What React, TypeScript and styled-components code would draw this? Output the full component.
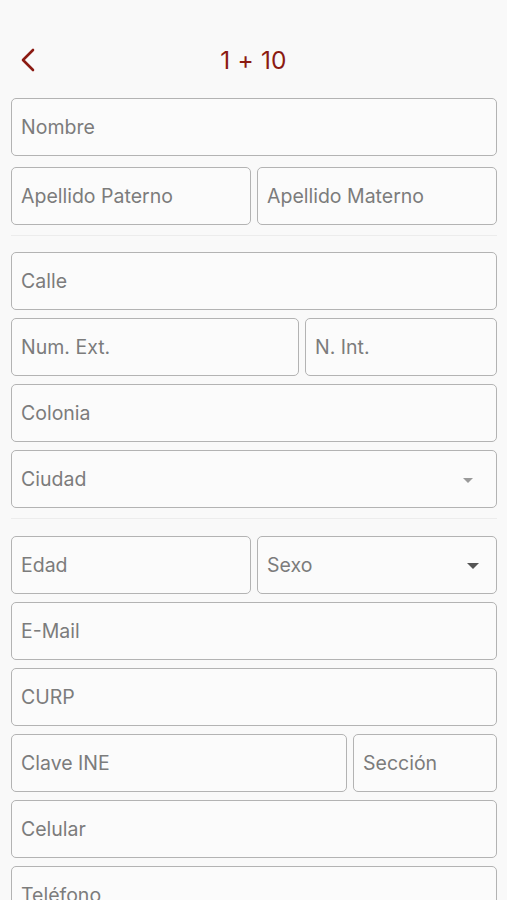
import React from "react";
import styled, { createGlobalStyle } from "styled-components";

const GlobalStyle = createGlobalStyle`
  body {
    margin: 0;
    background: #f9f9f9;
    font-family: Inter, "Liberation Sans", sans-serif;
  }
`;

const red = "#8b1a12";

const Screen = styled.div`
  width: 507px;
  min-height: 900px;
  background: #f9f9f9;
  overflow: hidden;
`;

const StatusBar = styled.div`
  height: 26px;
`;

const Header = styled.header`
  position: relative;
  height: 70px;
  display: flex;
  align-items: center;
  justify-content: center;
`;

const BackButton = styled.button`
  position: absolute;
  left: 14px;
  top: 20px;
  width: 28px;
  height: 28px;
  padding: 0;
  border: none;
  background: none;
  display: flex;
  align-items: center;
  justify-content: center;
`;

const Title = styled.h1`
  margin: 0;
  margin-top: -3px;
  font-size: 24.5px;
  font-weight: 400;
  color: ${red};
  letter-spacing: 0.2px;
`;

const Form = styled.form`
  padding: 2px 10px 0 11px;
  display: grid;
  row-gap: 8px;
`;

const Row = styled.div<{ $cols?: string }>`
  display: grid;
  grid-template-columns: ${({ $cols }) => $cols ?? "1fr 1fr"};
  column-gap: 6px;
`;

const Field = styled.input`
  min-width: 0;
  height: 58px;
  box-sizing: border-box;
  border: 1.5px solid #b3b3b3;
  border-radius: 5px;
  background: #fbfbfb;
  padding: 0 9px;
  font-family: Inter, "Liberation Sans", sans-serif;
  font-size: 19.5px;
  color: #333;
  outline: none;

  &::placeholder {
    color: #7c7c7c;
  }
`;

const Select = styled.div<{ $caretGap?: number }>`
  min-width: 0;
  height: 58px;
  box-sizing: border-box;
  border: 1.5px solid #b3b3b3;
  border-radius: 5px;
  background: #fbfbfb;
  padding: 0 ${({ $caretGap }) => $caretGap ?? 17}px 0 9px;
  display: flex;
  align-items: center;
  justify-content: space-between;
  font-size: 19.5px;
  color: #7c7c7c;
`;

const Caret = styled.span<{ $dim?: boolean }>`
  width: 0;
  height: 0;
  margin-top: 2px;
  border-left: ${({ $dim }) => ($dim ? 5 : 6)}px solid transparent;
  border-right: ${({ $dim }) => ($dim ? 5 : 6)}px solid transparent;
  border-top: ${({ $dim }) => ($dim ? "5px solid #9a9a9a" : "6px solid #555")};
`;

const Divider = styled.hr<{ $below?: number }>`
  margin: 2px 0 ${({ $below }) => $below ?? 8}px;
  border: none;
  height: 1px;
  background: #ececec;
`;

export default function App() {
  return (
    <Screen>
      <GlobalStyle />
      <StatusBar />
      <Header>
        <BackButton type="button" aria-label="Atrás">
          <svg width="16" height="24" viewBox="0 0 16 24" fill="none">
            <path
              d="M13 2 L3 12 L13 22"
              stroke={red}
              strokeWidth="2.6"
              strokeLinecap="round"
              strokeLinejoin="round"
            />
          </svg>
        </BackButton>
        <Title>1 + 10</Title>
      </Header>
      <Form>
        <Field placeholder="Nombre" />
        <Row style={{ marginTop: 3 }}>
          <Field placeholder="Apellido Paterno" />
          <Field placeholder="Apellido Materno" />
        </Row>
        <Divider $below={8} />
        <Field placeholder="Calle" />
        <Row $cols="3fr 2fr">
          <Field placeholder="Num. Ext." />
          <Field placeholder="N. Int." />
        </Row>
        <Field placeholder="Colonia" />
        <Select $caretGap={23}>
          <span>Ciudad</span>
          <Caret $dim />
        </Select>
        <Divider $below={9} />
        <Row>
          <Field placeholder="Edad" />
          <Select>
            <span>Sexo</span>
            <Caret />
          </Select>
        </Row>
        <Field placeholder="E-Mail" />
        <Field placeholder="CURP" />
        <Row $cols="7fr 3fr">
          <Field placeholder="Clave INE" />
          <Field placeholder="Sección" />
        </Row>
        <Field placeholder="Celular" />
        <Field placeholder="Teléfono" />
      </Form>
    </Screen>
  );
}
